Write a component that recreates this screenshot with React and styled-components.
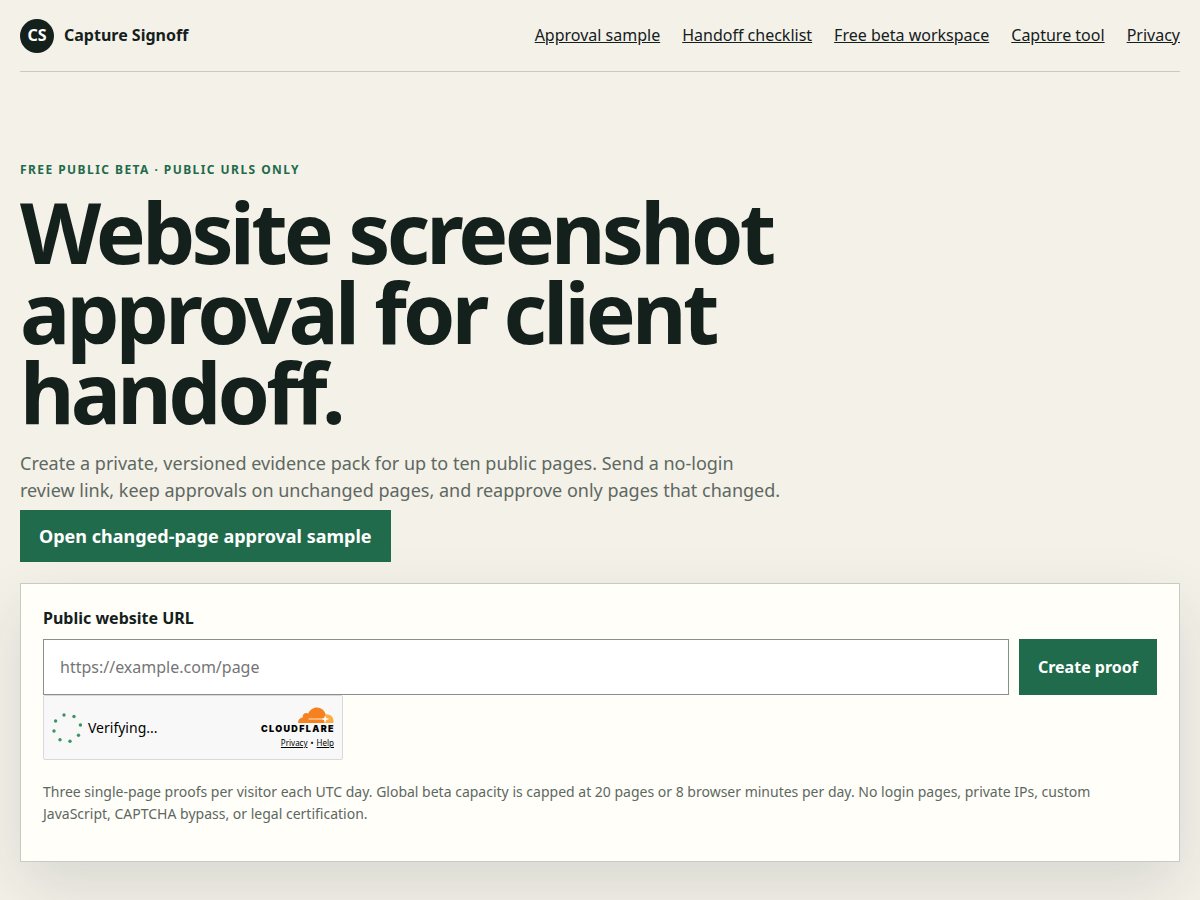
import React from 'react';
import styled, { createGlobalStyle } from 'styled-components';

const ink = '#14201c';
const muted = '#5d6861';
const green = '#1f6b4b';
const line = '#c9cbc2';

const GlobalStyle = createGlobalStyle`
  * { box-sizing: border-box; }
  body {
    margin: 0;
    background: #f4f1e9;
    color: ${ink};
    font: 16px/24px "Noto Sans", sans-serif;
  }
  a { color: inherit; }
`;

const Page = styled.div`
  max-width: 1240px;
  margin: 0 auto;
  padding: 0 20px 60px;
`;

const Header = styled.header`
  display: flex;
  align-items: center;
  justify-content: space-between;
  min-height: 72px;
  border-bottom: 1px solid ${line};
  line-height: 23px;
`;

const Brand = styled.a`
  display: flex;
  align-items: center;
  gap: 10px;
  font-weight: 700;
  text-decoration: none;
`;

const Mark = styled.span`
  display: grid;
  place-items: center;
  width: 34px;
  height: 34px;
  border-radius: 50%;
  background: ${ink};
  color: #fff;
`;

const Nav = styled.nav`
  display: flex;
  flex-wrap: wrap;
  gap: 22px;
`;

const Hero = styled.section`
  max-width: 780px;
  padding: 88px 0 21px;
`;

const Eyebrow = styled.p`
  margin: 0 0 12px;
  color: ${green};
  font-size: 12px;
  line-height: 20px;
  font-weight: 700;
  letter-spacing: 0.12em;
  text-transform: uppercase;
`;

const Title = styled.h1`
  margin: 0 0 18px;
  font-size: 84px;
  line-height: 80px;
  letter-spacing: -0.045em;
`;

const Lede = styled.p`
  max-width: 764px;
  margin: 0 0 6px;
  color: ${muted};
  font-size: 18px;
  line-height: 27px;
`;

const SampleLink = styled.a`
  display: inline-flex;
  align-items: center;
  min-height: 52px;
  padding: 0 19px;
  background: ${green};
  color: #fff;
  font-size: 18px;
  font-weight: 700;
  text-decoration: none;
`;

const Card = styled.form`
  padding: 22px 22px 36px;
  border: 1px solid ${line};
  background: #fffef9;
  box-shadow: 0 24px 60px rgba(20, 32, 28, 0.12);
`;

const Label = styled.label`
  display: block;
  margin-bottom: 9px;
  font-weight: 700;
`;

const Row = styled.div`
  display: flex;
  gap: 10px;
`;

const UrlInput = styled.input`
  flex: 1;
  min-width: 0;
  height: 56px;
  padding: 0 16px;
  border: 1px solid #87908b;
  border-radius: 0;
  background: #fff;
  color: ${ink};
  font: inherit;

  &::placeholder { color: #757575; }
`;

const Submit = styled.button`
  padding: 0 19px;
  border: 0;
  background: ${green};
  color: #fff;
  font: inherit;
  font-weight: 700;
`;

const Challenge = styled.div`
  display: flex;
  align-items: center;
  width: 300px;
  max-width: 100%;
  height: 65px;
  padding: 0 8px;
  border: 1px solid #d9d9d9;
  border-radius: 2px;
  background: #f8f8f8;
  color: #000;
`;

const Status = styled.span`
  flex: 1;
  margin-left: 6px;
  font-size: 14px;
`;

const Provider = styled.div`
  display: flex;
  flex-direction: column;
  align-items: flex-end;
`;

const Wordmark = styled.span`
  font: 900 9px/10px Inter, sans-serif;
  letter-spacing: 0.15em;
  margin-right: -1px;
`;

const Terms = styled.div`
  display: flex;
  gap: 3px;
  margin-top: 3px;
  font-size: 8px;
  line-height: 11px;
`;

const Note = styled.p`
  margin: 21px 0 0;
  color: ${muted};
  font-size: 14px;
  line-height: 22px;
`;

const links = ['Approval sample', 'Handoff checklist', 'Free beta workspace', 'Capture tool', 'Privacy'];

// dot centres, clockwise from the top
const dots = [[12, 3], [22, 4.5], [28.4, 13], [26.5, 23.2], [18, 29.2], [8, 27.7], [2, 19], [3.6, 9]];

function Spinner() {
  return <svg width="30" height="32" viewBox="0 0 30 32" aria-hidden="true">
    {dots.map(([x, y]) => <circle key={x} cx={x} cy={y} r="1.7" fill="#3b9461" />)}
  </svg>
}

function Cloud() {
  return <svg width="36" height="17" viewBox="0 0 36 17" aria-hidden="true">
    <path fill="#fbad41" d="M27.8 7.2c4.2-.4 7.7 2.5 7.7 6.8 0 .8-.1 1.4-.3 2H22l3-5z" />
    <path fill="#f6821f" d="M.2 16C-.3 12.8 1.9 10.6 4.7 10.4 4.2 7.3 7.4 4.8 10.2 6.5 11.8 2.7 15 .4 18.8.4c4.5 0 8 3 8.8 7.1l-.5 3.7L25.7 16z" />
    <path stroke="#fff" strokeWidth=".8" d="M10.5 12h15.2" />
    <path fill="#fff" d="M27.2 8.2l1 2.8 3.1 1-3.1 1-1.2 3-1-3-2.4-1 2.5-1z" />
  </svg>
}

export default function App() {
  return <>
    <GlobalStyle />
    <Page>
      <Header>
        <Brand href="#"><Mark>CS</Mark>Capture Signoff</Brand>
        <Nav>
          {links.map(text => <a href="#" key={text}>{text}</a>)}
        </Nav>
      </Header>
      <main>
        <Hero>
          <Eyebrow>Free public beta · Public URLs only</Eyebrow>
          <Title>Website screenshot approval for client handoff.</Title>
          <Lede>
            Create a private, versioned evidence pack for up to ten public pages. Send a no-login
            review link, keep approvals on unchanged pages, and reapprove only pages that changed.
          </Lede>
          <SampleLink href="#">Open changed-page approval sample</SampleLink>
        </Hero>
        <Card onSubmit={e => e.preventDefault()}>
          <Label htmlFor="url">Public website URL</Label>
          <Row>
            <UrlInput id="url" type="url" placeholder="https://example.com/page" />
            <Submit type="submit">Create proof</Submit>
          </Row>
          <Challenge>
            <Spinner />
            <Status>Verifying...</Status>
            <Provider>
              <Cloud />
              <Wordmark>CLOUDFLARE</Wordmark>
              <Terms><a href="#">Privacy</a><span>•</span><a href="#">Help</a></Terms>
            </Provider>
          </Challenge>
          <Note>
            Three single-page proofs per visitor each UTC day. Global beta capacity is capped at 20 pages or 8 browser
            minutes per day. No login pages, private IPs, custom JavaScript, CAPTCHA bypass, or legal certification.
          </Note>
        </Card>
      </main>
    </Page>
  </>
}
